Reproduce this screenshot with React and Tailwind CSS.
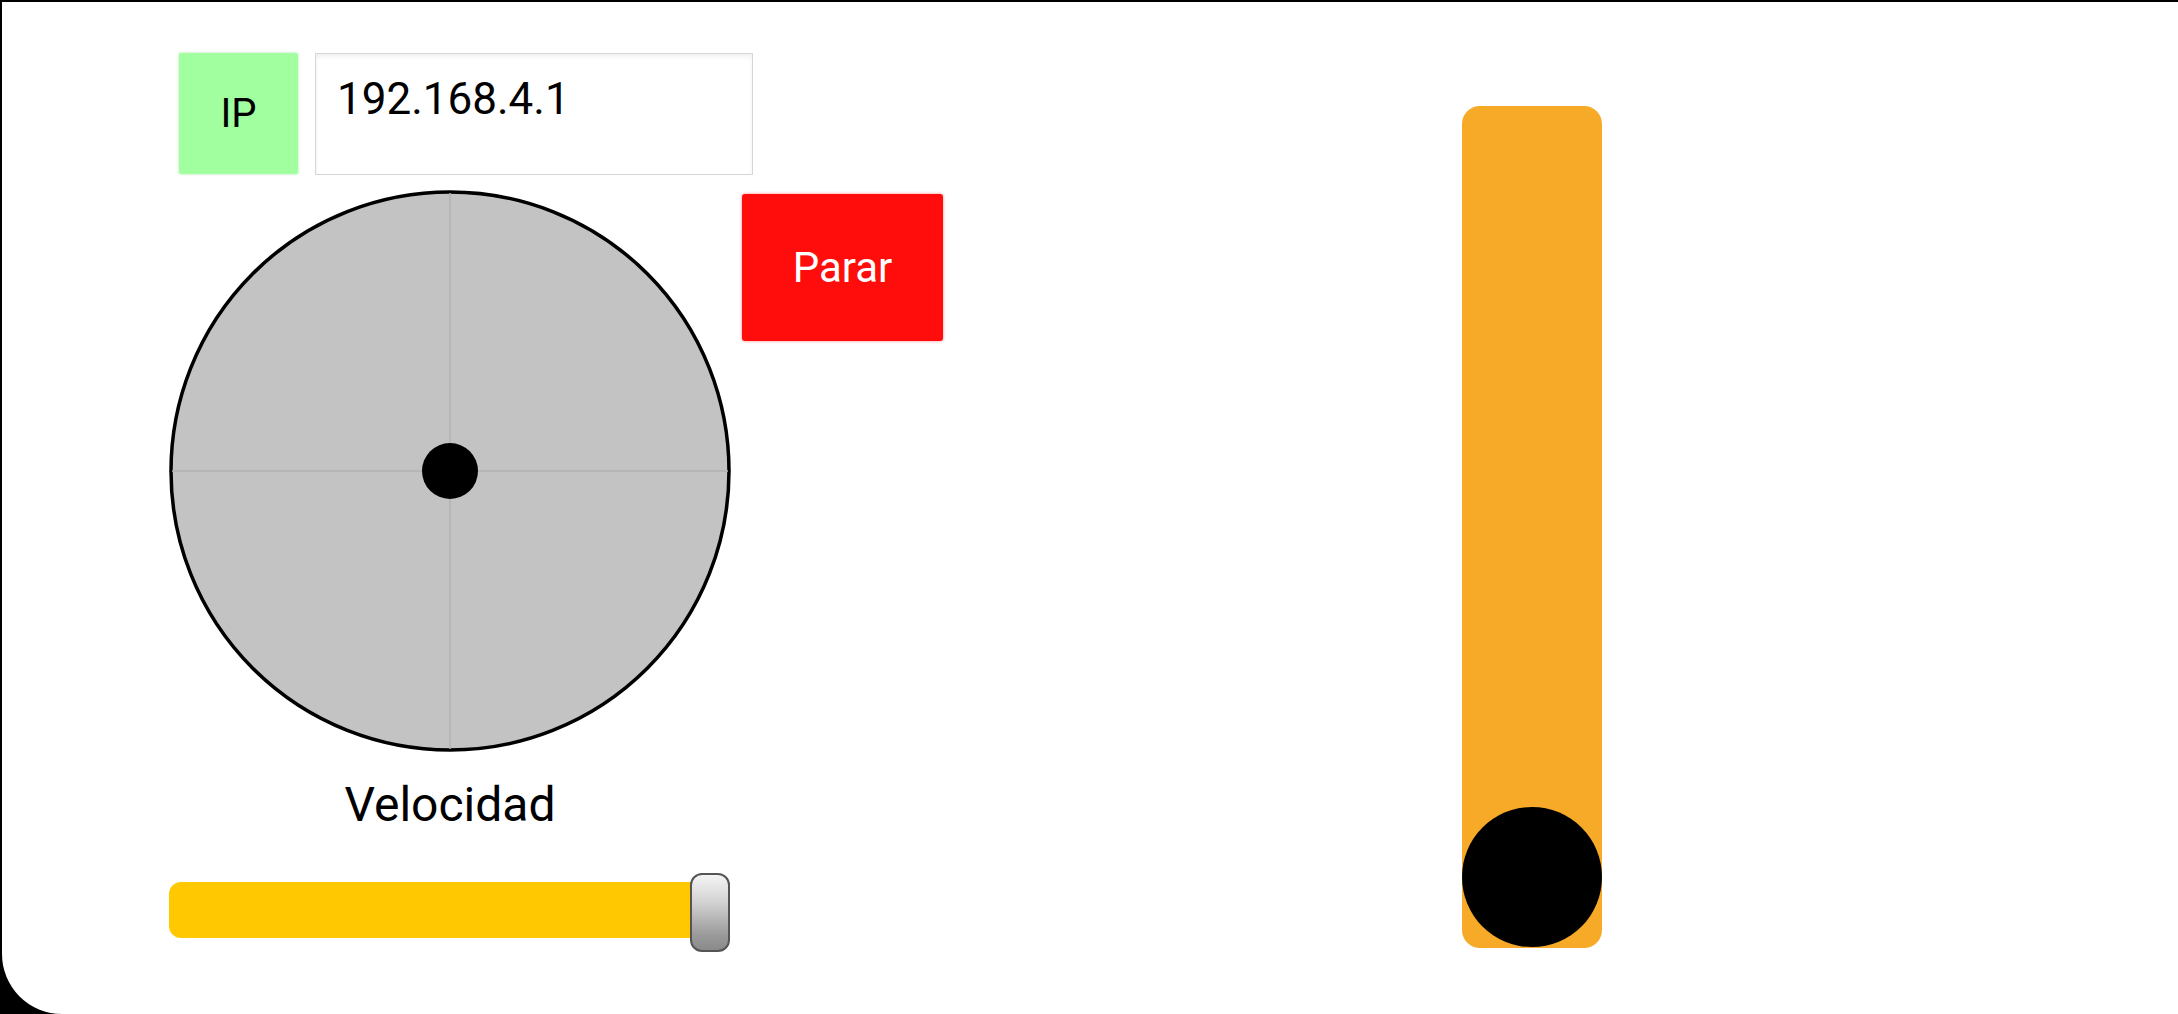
import React from "react";

const Joystick = () => {
  return (
    <svg width="562" height="562" viewBox="0 0 562 562" className="block shrink-0">
      <circle cx="281" cy="281" r="279" fill="#c3c3c3" stroke="#000" strokeWidth="3.5" />
      <line x1="281" y1="3" x2="281" y2="559" stroke="#b2b2b2" strokeWidth="1.5" />
      <line x1="3" y1="281" x2="559" y2="281" stroke="#b2b2b2" strokeWidth="1.5" />
      <circle cx="281" cy="281" r="28" fill="#000" />
    </svg>
  );
};

const App = () => {
  return (
    <div className="w-[2178px] h-[1014px] bg-black pt-[2px] pl-[2px] font-['Roboto',sans-serif]">
      <div className="flex h-full bg-white rounded-bl-[60px] pl-[167px]">

        {/* Left column: IP, joystick, speed */}
        <div className="flex flex-col pt-[51px]">
          <div className="flex items-start gap-[17px] pl-[10px]">
            <div className="w-[119px] h-[121px] flex items-center justify-center bg-[#a1ff9f] rounded-[2px] shadow-[0_0_3px_rgba(120,220,120,0.6)] text-[40px] text-black">
              IP
            </div>
            <div className="w-[438px] h-[122px] border border-[#d6d6d6] bg-white shadow-[inset_0_3px_4px_rgba(0,0,0,0.06)] pl-[21px] pt-[19px] text-[44px] leading-[52px] text-black">
              192.168.4.1
            </div>
          </div>

          <div className="flex items-start mt-[15px]">
            <Joystick />
            <button className="ml-[11px] mt-[4px] w-[201px] h-[147px] bg-[#ff0d0d] rounded-[3px] shadow-[0_0_3px_rgba(255,0,0,0.5)] text-white text-[42px] flex items-center justify-center">
              Parar
            </button>
          </div>

          <div className="w-[562px] mt-[25px] text-center text-[48px] leading-[56px] text-black">
            Velocidad
          </div>

          <div className="relative w-[561px] h-[79px] mt-[40px]">
            <div className="mt-[9px] w-full h-[56px] bg-[#ffc800] rounded-[12px]" />
            <div className="absolute right-0 top-0 w-[40px] h-[79px] rounded-[12px] border-2 border-[#555] bg-[linear-gradient(to_bottom,#f4f4f4,#d4d4d4_35%,#9a9a9a_80%,#8a8a8a)]" />
          </div>
        </div>

        {/* Vertical throttle */}
        <div className="ml-[519px] mt-[104px]">
          <div className="relative w-[140px] h-[842px] bg-[#f7a928] rounded-[18px]">
            <div className="absolute bottom-[1px] left-0 w-[140px] h-[140px] rounded-full bg-black" />
          </div>
        </div>
      </div>
    </div>
  );
};

export default App;
